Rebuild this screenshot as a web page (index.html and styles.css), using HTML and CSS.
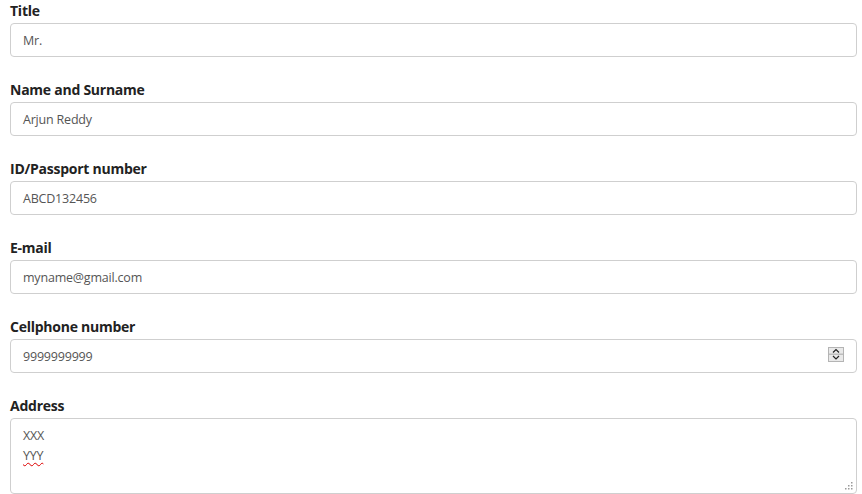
FILE: index.html
```html
<!DOCTYPE html>
<html>
<head>
<meta charset="utf-8">
<link rel="stylesheet" href="styles.css">
</head>
<body>
<form class="form">
  <div class="group">
    <label class="label">Title</label>
    <div class="control">Mr.</div>
  </div>
  <div class="group">
    <label class="label">Name and Surname</label>
    <div class="control">Arjun Reddy</div>
  </div>
  <div class="group">
    <label class="label">ID/Passport number</label>
    <div class="control">ABCD132456</div>
  </div>
  <div class="group">
    <label class="label">E-mail</label>
    <div class="control">myname@gmail.com</div>
  </div>
  <div class="group">
    <label class="label">Cellphone number</label>
    <div class="control">9999999999
      <span class="spin">
        <svg width="16" height="15" viewBox="0 0 16 15">
          <rect x="0.5" y="0.5" width="15" height="14" fill="#e9e9e9" stroke="#b4b4b4"/>
          <rect x="1" y="6.5" width="14" height="1.5" fill="#bdbdbd"/>
          <path d="M5 5.5 L8 2.5 L11 5.5" fill="none" stroke="#222" stroke-width="1.2"/>
          <path d="M5 9 L8 12 L11 9" fill="none" stroke="#222" stroke-width="1.2"/>
        </svg>
      </span>
    </div>
  </div>
  <div class="group">
    <label class="label">Address</label>
    <div class="control textarea">XXX<br><span class="misspelled">YYY</span>
      <span class="grip">
        <svg width="9" height="9" viewBox="0 0 9 9">
          <g fill="#9a9a9a">
            <rect x="7" y="1" width="1.5" height="1.5"/>
            <rect x="4" y="4" width="1.5" height="1.5"/>
            <rect x="7" y="4" width="1.5" height="1.5"/>
            <rect x="1" y="7" width="1.5" height="1.5"/>
            <rect x="4" y="7" width="1.5" height="1.5"/>
            <rect x="7" y="7" width="1.5" height="1.5"/>
          </g>
        </svg>
      </span>
    </div>
  </div>
</form>
</body>
</html>
```
FILE: styles.css
```css
html, body {
  margin: 0;
  padding: 0;
  background: #fff;
}
.form {
  padding: 0 5px 0 10px;
  font-family: "Open Sans", "Noto Sans", sans-serif;
}
.group {
  display: flex;
  flex-direction: column;
  margin-bottom: 22px;
}
.label {
  font-size: 14px;
  font-weight: 700;
  line-height: 19px;
  padding-top: 1px;
  color: #222;
  margin-bottom: 3px;
  letter-spacing: -0.25px;
}
.control {
  position: relative;
  box-sizing: border-box;
  height: 34px;
  border: 1px solid #cfcfcf;
  border-radius: 4px;
  padding: 0 12px;
  display: flex;
  align-items: center;
  font-size: 12.5px;
  color: #555;
  letter-spacing: -0.2px;
}
.spin {
  position: absolute;
  right: 12px;
  top: 7px;
  width: 16px;
  height: 15px;
}
.spin svg,
.grip svg {
  display: block;
}
.textarea {
  display: block;
  height: 76px;
  padding: 7px 12px;
  line-height: 20px;
}
.grip {
  position: absolute;
  right: 3px;
  bottom: 3px;
  width: 9px;
  height: 9px;
}
.misspelled {
  text-decoration: underline wavy #d00;
  text-decoration-thickness: 1px;
  text-underline-offset: 2px;
}
```
